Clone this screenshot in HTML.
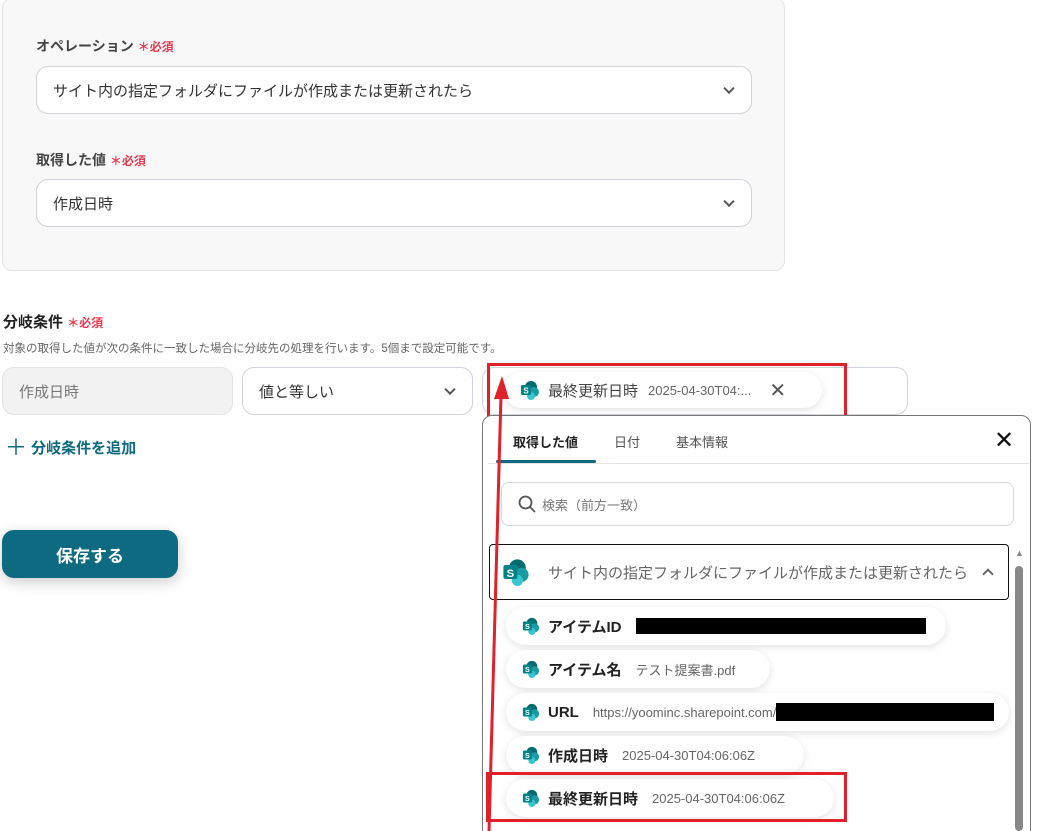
<!DOCTYPE html>
<html><head><meta charset="utf-8"><style>
*{box-sizing:border-box;margin:0;padding:0}
html,body{width:1052px;height:831px;overflow:hidden}
body{background:#fff;font-family:"Liberation Sans","Noto Sans CJK JP",sans-serif;color:#333;position:relative}
.a{position:absolute}
.card{left:2px;top:-2px;width:783px;height:273px;background:#f8f8f9;border:1px solid #e2e4e8;border-radius:10px}
.lbl{font-size:14px;font-weight:bold;color:#444}
.req{color:#e8384f;font-size:12px;font-weight:bold}
.sel{background:#fff;border:1px solid #cfd3da;border-radius:12px;font-size:15px;color:#333;padding-left:16px;display:flex;align-items:center}
.chev{position:absolute;right:18px;top:50%;width:8px;height:8px;border-right:2px solid #555;border-bottom:2px solid #555;transform:translateY(-70%) rotate(45deg)}
.pill{background:#fff;border-radius:20px;box-shadow:0 2px 8px rgba(0,0,0,.12);display:flex;align-items:center;padding-left:16px;height:38px}
.pill b{font-size:15px;color:#222;margin-left:8px}
.pill span{font-size:13px;color:#666;margin-left:14px}
.red{border:3px solid #e0202a}
</style></head><body>
<svg width="0" height="0" style="position:absolute"><defs><symbol id="sp" viewBox="0 0 20 20"><circle cx="11" cy="7" r="6" fill="#036c70"/><circle cx="14" cy="12" r="5" fill="#1a9ba1"/><circle cx="11" cy="16" r="4" fill="#37c6d0"/><rect x="1" y="5" width="10" height="10" rx="1.5" fill="#038387"/><text x="6" y="13.5" font-size="8" fill="#fff" text-anchor="middle" font-family="Liberation Sans" font-weight="bold">S</text></symbol></defs></svg>
<div class="a card"></div>
<div class="a lbl" style="left:36px;top:36px">オペレーション <span class="req">＊必須</span></div>
<div class="a sel" style="left:36px;top:66px;width:716px;height:48px">サイト内の指定フォルダにファイルが作成または更新されたら<i class="chev"></i></div>
<div class="a lbl" style="left:36px;top:150px">取得した値 <span class="req">＊必須</span></div>
<div class="a sel" style="left:36px;top:179px;width:716px;height:48px">作成日時<i class="chev"></i></div>

<div class="a" style="left:3px;top:311px;font-size:15px;font-weight:bold;color:#222">分岐条件 <span class="req">＊必須</span></div>
<div class="a" style="left:3px;top:340px;font-size:11.5px;color:#666">対象の取得した値が次の条件に一致した場合に分岐先の処理を行います。5個まで設定可能です。</div>
<div class="a sel" style="left:2px;top:367px;width:231px;height:48px;background:#f2f2f2;border-color:#e2e4e8;color:#777">作成日時</div>
<div class="a sel" style="left:242px;top:367px;width:231px;height:48px">値と等しい<i class="chev"></i></div>
<div class="a sel" style="left:482px;top:367px;width:426px;height:48px"></div>
<div class="a pill" style="left:504px;top:372px;width:318px;height:36px"><svg width="20" height="20"><use href="#sp"/></svg><b style="font-weight:normal;color:#444">最終更新日時</b><span style="margin-left:10px">2025-04-30T04:...</span><span style="margin-left:18px;font-size:20px;color:#555">✕</span></div>
<div class="a red" style="left:487px;top:363px;width:360px;height:56px"></div>
<div class="a" style="left:5px;top:430px;font-size:15px;font-weight:bold;color:#0d6a80"><span style="font-size:22px;font-weight:normal;vertical-align:-2px">＋</span> 分岐条件を追加</div>
<div class="a" style="left:2px;top:530px;width:176px;height:48px;background:#0d6a80;border-radius:12px;color:#fff;font-weight:bold;font-size:17px;display:flex;align-items:center;justify-content:center;box-shadow:0 4px 14px rgba(0,0,0,.2)">保存する</div>

<div class="a" style="left:482px;top:415px;width:549px;height:430px;border:1px solid #777;border-radius:10px;background:#fff"></div>
<div class="a" style="left:513px;top:432px;font-size:13px;font-weight:bold;color:#222">取得した値</div>
<div class="a" style="left:614px;top:432px;font-size:13px;color:#555">日付</div>
<div class="a" style="left:676px;top:432px;font-size:13px;color:#555">基本情報</div>
<div class="a" style="left:994px;top:426px;font-size:24px;color:#111">✕</div>
<div class="a" style="left:488px;top:463px;width:541px;height:1px;background:#e3e3e3"></div>
<div class="a" style="left:496px;top:460px;width:100px;height:3px;background:#0d6a80;border-radius:2px"></div>
<div class="a" style="left:501px;top:482px;width:513px;height:44px;border:1px solid #d4d7dc;border-radius:8px;font-size:13px;color:#777;display:flex;align-items:center;padding-left:16px"><svg width="18" height="18" viewBox="0 0 18 18" style="margin-right:6px"><circle cx="7.5" cy="7.5" r="6" fill="none" stroke="#555" stroke-width="1.8"/><path d="M12 12l5 5" stroke="#555" stroke-width="1.8"/></svg>検索（前方一致）</div>
<div class="a" style="left:489px;top:544px;width:520px;height:56px;border:1.5px solid #111;border-radius:4px;display:flex;align-items:center;padding-left:12px;font-size:15px;color:#666"><svg width="28" height="28"><use href="#sp"/></svg><span style="margin-left:18px">サイト内の指定フォルダにファイルが作成または更新されたら</span><span style="margin-left:16px;width:8px;height:8px;border-left:2px solid #666;border-top:2px solid #666;transform:rotate(45deg);margin-top:4px"></span></div>
<div class="a" style="left:1015px;top:548px;font-size:9px;color:#888">▲</div>
<div class="a" style="left:1015px;top:566px;width:8px;height:265px;background:#888;border-radius:4px"></div>
<div class="a pill" style="left:506px;top:607px;width:440px"><svg width="18" height="18"><use href="#sp"/></svg><b>アイテムID</b><i style="margin-left:14px;width:290px;height:16px;background:#000"></i></div>
<div class="a pill" style="left:506px;top:650px;width:264px"><svg width="18" height="18"><use href="#sp"/></svg><b>アイテム名</b><span>テスト提案書.pdf</span></div>
<div class="a pill" style="left:506px;top:693px;width:503px"><svg width="18" height="18"><use href="#sp"/></svg><b>URL</b><span>https://yoominc.sharepoint.com/</span><i style="width:218px;height:18px;background:#000"></i></div>
<div class="a pill" style="left:506px;top:736px;width:298px"><svg width="18" height="18"><use href="#sp"/></svg><b>作成日時</b><span>2025-04-30T04:06:06Z</span></div>
<div class="a pill" style="left:506px;top:779px;width:328px"><svg width="18" height="18"><use href="#sp"/></svg><b>最終更新日時</b><span>2025-04-30T04:06:06Z</span></div>
<div class="a red" style="left:486px;top:772px;width:361px;height:50px"></div>
<svg class="a" style="left:0;top:0" width="1052" height="831"><line x1="489" y1="831" x2="501" y2="395" stroke="#e0202a" stroke-width="3"/><polygon points="502,376 494,399 509,399" fill="#e0202a"/></svg>
</body></html>
